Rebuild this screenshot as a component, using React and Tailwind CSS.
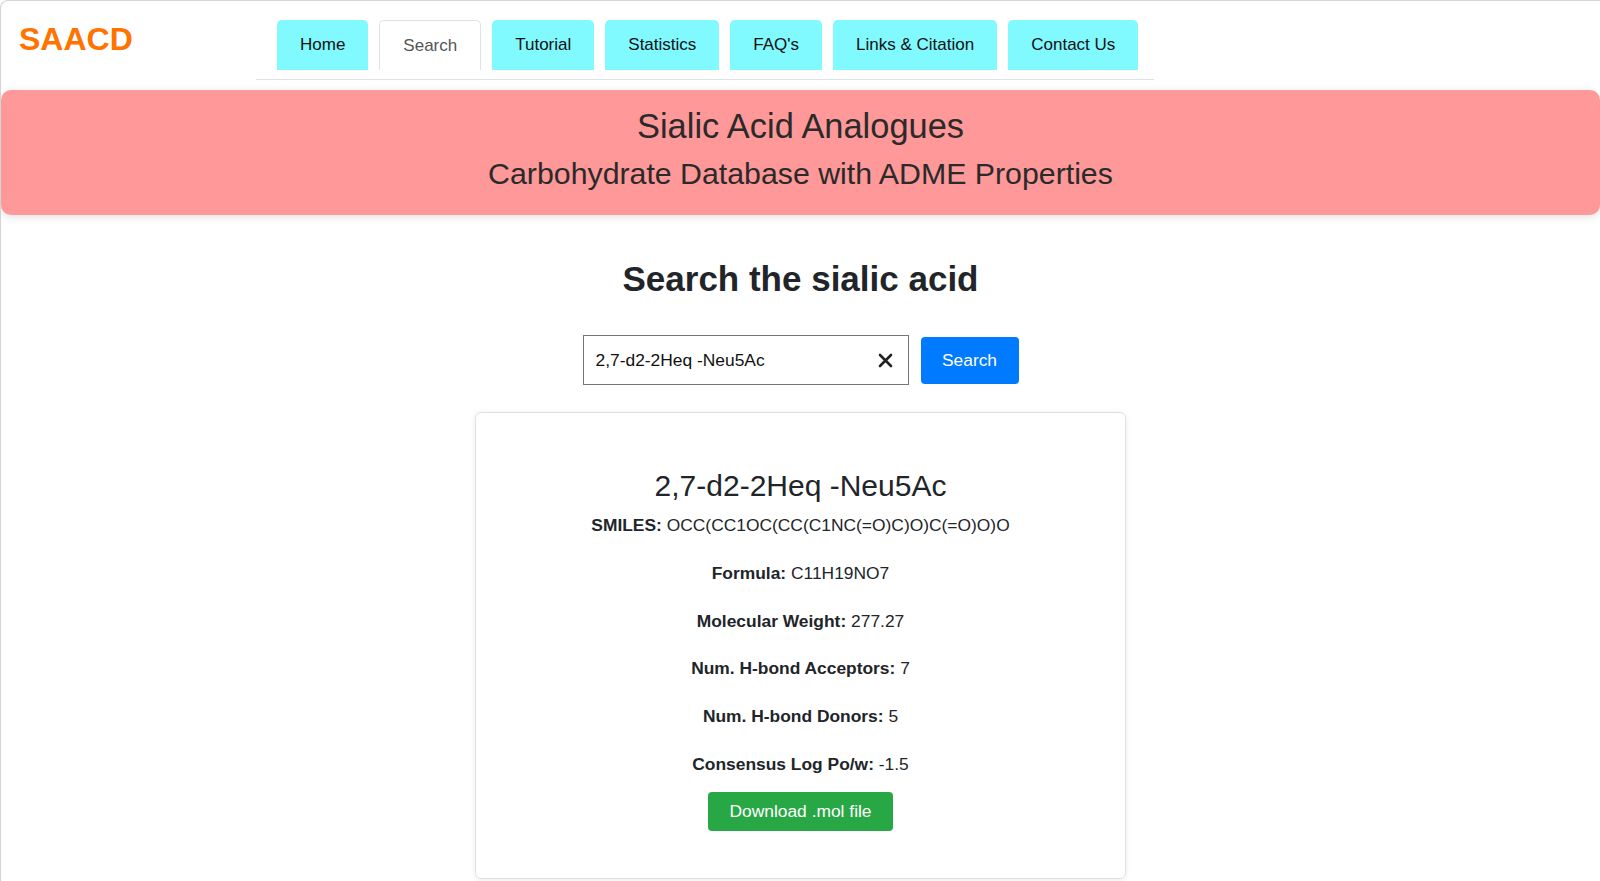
import React from 'react';

// Tabs in the top navigation, "Search" is the active one
const tabs = ['Home', 'Search', 'Tutorial', 'Statistics', "FAQ's", 'Links & Citation', 'Contact Us'];

const properties = [
    { rotulo: 'Formula', valor: 'C11H19NO7' },
    { rotulo: 'Molecular Weight', valor: '277.27' },
    { rotulo: 'Num. H-bond Acceptors', valor: '7' },
    { rotulo: 'Num. H-bond Donors', valor: '5' },
    { rotulo: 'Consensus Log Po/w', valor: '-1.5' },
];

const NavTab = ({ label, active }) => (
    <li className="shrink-0">
        <a
            href="#"
            className={`flex items-center whitespace-nowrap h-[50px] px-[23px] rounded-t-[5px] text-[17px] ${
                active
                    ? 'bg-white border border-b-0 border-[#dee2e6] text-[#555]'
                    : 'bg-[#80f9ff] text-[#111]'
            }`}
        >
            {label}
        </a>
    </li>
);

const PropLine = ({ rotulo, valor }) => (
    <p className="text-[17.4px] leading-[26px] mb-[21.8px]">
        <strong className="font-bold">{rotulo}:</strong> {valor}
    </p>
);

export default function App() {
    return (
        <div className="min-h-[881px] bg-white font-['Liberation_Sans',Arial,sans-serif] text-[#212529] border-t border-l border-[#d4d4d4] rounded-tl-[8px] overflow-hidden">
            {/* Header */}
            <header className="flex items-start pt-[19px]">
                <div className="w-[255px] shrink-0 pl-[18px]">
                    <span className="block text-[32px] leading-[38px] font-bold text-[#ff7300]">SAACD</span>
                </div>
                <nav className="w-[898px] shrink-0 border-b border-[#dee2e6] pb-[9px]">
                    <ul className="flex gap-[11px] pl-[21px]">
                        {tabs.map((t) => (
                            <NavTab key={t} label={t} active={t === 'Search'} />
                        ))}
                    </ul>
                </nav>
            </header>

            {/* Banner */}
            <section className="mt-[10px] bg-[#ff9898] rounded-[10px] shadow-[0_2px_8px_rgba(0,0,0,0.12)] text-center pt-[16px] pb-[23px]">
                <h1 className="text-[34.4px] leading-[40px] text-[#2a2a2a]">Sialic Acid Analogues</h1>
                <p className="mt-[10px] text-[30.3px] leading-[36px] text-[#2a2a2a]">Carbohydrate Database with ADME Properties</p>
            </section>

            {/* Search section */}
            <main className="flex flex-col items-center">
                <h2 className="mt-[43px] text-[35px] leading-[42px] font-bold">Search the sialic acid</h2>

                <div className="mt-[35px] flex items-center gap-[12px]">
                    <div className="relative w-[326px] h-[50px] border border-[#767676] flex items-center pl-[12px] pr-[12px]">
                        <input
                            type="text"
                            defaultValue="2,7-d2-2Heq -Neu5Ac"
                            className="flex-1 outline-none text-[17.4px] text-[#111] bg-transparent"
                        />
                        <button className="ml-2 w-[20px] h-[20px] flex items-center justify-center text-[#222]">
                            <svg width="15" height="15" viewBox="0 0 15 15" fill="none" stroke="currentColor" strokeWidth="2.6" strokeLinecap="round">
                                <line x1="2" y1="2" x2="13" y2="13" />
                                <line x1="13" y1="2" x2="2" y2="13" />
                            </svg>
                        </button>
                    </div>
                    <button className="w-[98px] h-[47px] bg-[#007bff] text-white rounded-[4px] text-[17.4px]">Search</button>
                </div>

                {/* Result card */}
                <div className="mt-[27px] w-[651px] border border-[#e0e0e0] rounded-[6px] shadow-[0_1px_6px_rgba(0,0,0,0.08)] text-center pt-[55px] pb-[47px]">
                    <h3 className="text-[30px] leading-[36px]">2,7-d2-2Heq -Neu5Ac</h3>
                    <p className="mt-[8px] text-[17.4px] leading-[26px] mb-[21.8px]">
                        <strong className="font-bold">SMILES:</strong> OCC(CC1OC(CC(C1NC(=O)C)O)C(=O)O)O
                    </p>
                    {properties.map((p) => (
                        <PropLine key={p.rotulo} {...p} />
                    ))}
                    <button className="-mt-[7px] w-[185px] h-[39px] bg-[#28a745] text-white rounded-[4px] text-[17.4px]">
                        Download .mol file
                    </button>
                </div>
            </main>
        </div>
    );
}
